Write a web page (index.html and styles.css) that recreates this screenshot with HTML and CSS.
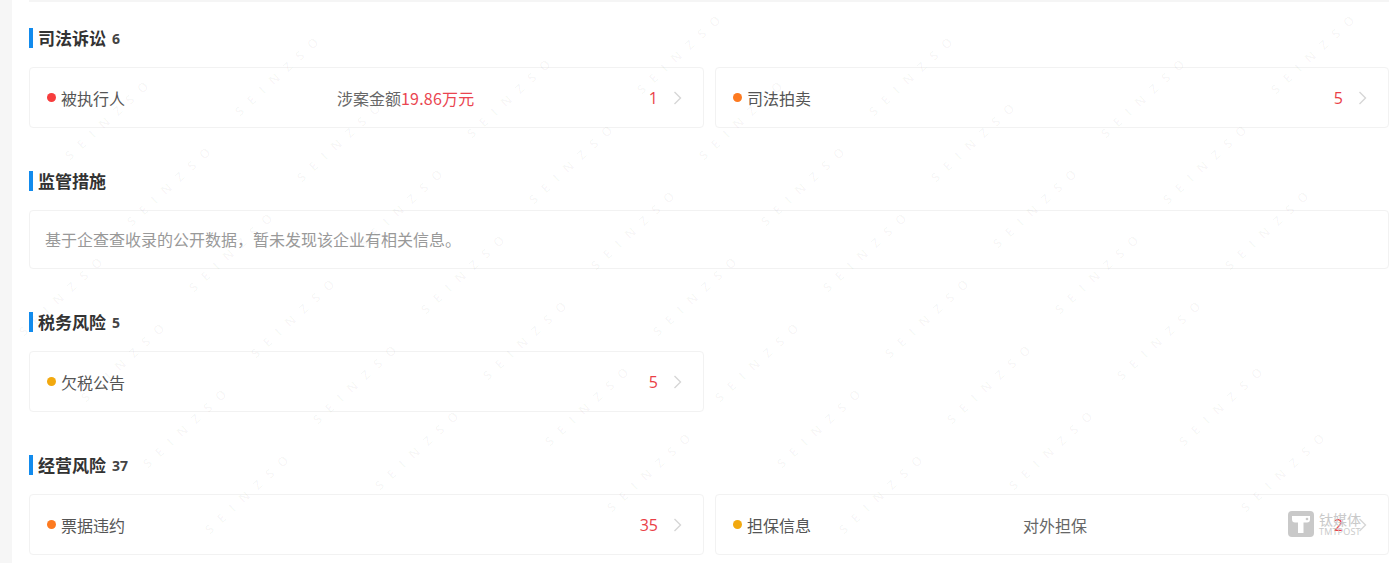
FILE: index.html
```html
<!DOCTYPE html>
<html lang="zh-CN">

<head>
    <meta charset="UTF-8">
    <title>风险信息</title>
    <link rel="stylesheet" href="styles.css">
</head>

<body>
    <div class="page">
        <div class="top-line"></div>

        <div class="section section-first">
            <div class="heading"><span class="heading-title">司法诉讼</span><span class="heading-count">6</span></div>
            <div class="cards">
                <div class="card">
                    <span class="dot dot-red"></span>
                    <span class="name">被执行人</span>
                    <span class="info">涉案金额<span class="red">19.86万元</span></span>
                    <span class="count">1</span>
                    <svg class="arrow" viewBox="0 0 10 14"><path d="M1.5 1l6 6-6 6" /></svg>
                </div>
                <div class="card">
                    <span class="dot dot-orange"></span>
                    <span class="name">司法拍卖</span>
                    <span class="info"></span>
                    <span class="count">5</span>
                    <svg class="arrow" viewBox="0 0 10 14"><path d="M1.5 1l6 6-6 6" /></svg>
                </div>
            </div>
        </div>

        <div class="section">
            <div class="heading"><span class="heading-title">监管措施</span></div>
            <div class="empty">基于企查查收录的公开数据，暂未发现该企业有相关信息。</div>
        </div>

        <div class="section">
            <div class="heading"><span class="heading-title">税务风险</span><span class="heading-count">5</span></div>
            <div class="cards">
                <div class="card">
                    <span class="dot dot-yellow"></span>
                    <span class="name">欠税公告</span>
                    <span class="info"></span>
                    <span class="count">5</span>
                    <svg class="arrow" viewBox="0 0 10 14"><path d="M1.5 1l6 6-6 6" /></svg>
                </div>
            </div>
        </div>

        <div class="section">
            <div class="heading"><span class="heading-title">经营风险</span><span class="heading-count">37</span></div>
            <div class="cards">
                <div class="card">
                    <span class="dot dot-orange"></span>
                    <span class="name">票据违约</span>
                    <span class="info"></span>
                    <span class="count">35</span>
                    <svg class="arrow" viewBox="0 0 10 14"><path d="M1.5 1l6 6-6 6" /></svg>
                </div>
                <div class="card">
                    <span class="dot dot-yellow"></span>
                    <span class="name">担保信息</span>
                    <span class="info">对外担保</span>
                    <span class="count">2</span>
                    <svg class="arrow" viewBox="0 0 10 14"><path d="M1.5 1l6 6-6 6" /></svg>
                </div>
            </div>
        </div>

        <svg class="marks" id="marks" width="1387" height="563"></svg>

        <div class="logo">
            <svg class="logo-mark" viewBox="0 0 26 26">
                <rect width="26" height="26" rx="4" fill="#c4c4c4" />
                <path d="M4 5h18v3.5a3 3 0 0 1-3 3h-3.500V22h-5.500V11.500H7a3 3 0 0 1-3-3z" fill="#fff" />
                <circle cx="19" cy="8" r="1.300" fill="#c4c4c4" />
            </svg>
            <div class="logo-text">
                <div class="logo-cn">钛媒体</div>
                <div class="logo-en">TMTPOST</div>
            </div>
        </div>
    </div>

    <script src="marks.js"></script>
</body>

</html>
```

FILE: styles.css
```css
html,
body {
    margin: 0;
    padding: 0;
    height: 563px;
    overflow: hidden;
}

body {
    background-color: #f6f6f6;
    font-family: "Noto Sans CJK SC", "Noto Sans", sans-serif;
    color: #333;
}

.page {
    position: relative;
    margin-left: 12px;
    height: 563px;
    padding: 0 10px 0 17px;
    background-color: #fff;
    overflow: hidden;
}

.top-line {
    height: 2px;
    background-color: #f5f5f5;
}

.section {
    margin-top: 43px;
}

.section-first {
    margin-top: 26px;
}

.heading {
    display: flex;
    align-items: center;
    height: 20px;
    border-left: 4px solid #128bed;
    padding-left: 5px;
    margin-bottom: 19px;
}

.heading-title {
    margin-bottom: 2px;
    font-size: 17px;
    font-weight: bold;
    color: #333;
}

.heading-count {
    margin-left: 6px;
    font-family: "Open Sans", sans-serif;
    font-size: 14px;
    font-weight: bold;
    color: #444;
}

.cards {
    display: grid;
    grid-template-columns: 675px 674px;
    gap: 11px;
}

.card {
    display: flex;
    align-items: center;
    height: 59px;
    border: 1px solid #f2f2f2;
    border-radius: 4px;
    padding: 0 20px 0 17px;
    background-color: #fff;
    font-size: 16px;
    color: #555;
}

.dot {
    flex: none;
    width: 9px;
    height: 9px;
    border-radius: 50%;
    margin-right: 5px;
}

.dot-red {
    background-color: #f73d3d;
}

.dot-orange {
    background-color: #fd7a20;
}

.dot-yellow {
    background-color: #f2a90f;
}

.name {
    flex: none;
    width: 276px;
}

.info {
    flex: 1;
    color: #666;
}

.red {
    color: #ea4550;
    letter-spacing: 0.2px;
}

.count {
    color: #ea3f47;
    font-family: "Open Sans", sans-serif;
    font-size: 16px;
    font-weight: 500;
    margin-right: 15px;
}

.arrow {
    flex: none;
    width: 10px;
    height: 14px;
    fill: none;
    stroke: #d6d6d6;
    stroke-width: 1.4;
}

.empty {
    display: flex;
    align-items: center;
    height: 55px;
    border: 1px solid #f2f2f2;
    border-radius: 4px;
    padding: 0 0 2px 15px;
    font-size: 16px;
    color: #999;
}

.marks {
    position: absolute;
    top: 0;
    left: 0;
    pointer-events: none;
}

.marks text {
    font-family: "Open Sans", sans-serif;
    font-size: 13px;
    font-weight: bold;
    letter-spacing: 9px;
    fill: #000;
    fill-opacity: 0.03;
}

.logo {
    position: absolute;
    top: 511px;
    left: 1276px;
    display: flex;
    gap: 5px;
    opacity: 0.9;
}

.logo-mark {
    width: 26px;
    height: 26px;
}

.logo-cn {
    font-size: 14px;
    line-height: 16px;
    color: #c4c4c4;
}

.logo-en {
    font-family: "Open Sans", sans-serif;
    font-size: 9px;
    line-height: 10px;
    letter-spacing: 0.2px;
    color: #c4c4c4;
}
```

FILE: marks.js
```js
// faint diagonal watermark, repeated on a slanted lattice
const marks = document.getElementById("marks");
const originX = 720 - 12;
const originY = 403;

for (let m = -12; m <= 12; m++) {
    for (let n = -12; n <= 12; n++) {
        const x = originX + m * 170 + n * 62;
        const y = originY - m * 44 + n * 66;
        // only the ones that fit whole on the page
        if (x < 4 || x > 1270 || y < 90 || y > 555) continue;
        const text = document.createElementNS("http://www.w3.org/2000/svg", "text");
        text.setAttribute("transform", `translate(${x} ${y}) rotate(-42.7)`);
        text.textContent = "SEINZSO";
        marks.appendChild(text);
    }
}
```
